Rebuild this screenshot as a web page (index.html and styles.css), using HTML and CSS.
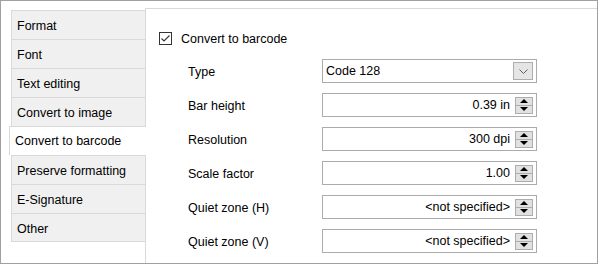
FILE: index.html
```html
<!DOCTYPE html>
<html>
<head>
<meta charset="utf-8">
<link rel="stylesheet" href="styles.css">
</head>
<body>
<div class="window">
  <div class="tabs">
    <div class="tab">Format</div>
    <div class="tab">Font</div>
    <div class="tab">Text editing</div>
    <div class="tab">Convert to image</div>
    <div class="tab selected">Convert to barcode</div>
    <div class="tab">Preserve formatting</div>
    <div class="tab">E-Signature</div>
    <div class="tab last">Other</div>
  </div>
  <div class="panel">
    <div class="check-row">
      <span class="checkbox">
        <svg width="13" height="13" viewBox="0 0 13 13"><polyline points="2.5,6.5 5,9 10.5,3.5" fill="none" stroke="#333" stroke-width="1.1"/></svg>
      </span>
      <span class="check-label">Convert to barcode</span>
    </div>
    <div class="fields">
      <div class="label">Type</div>
      <div class="box combo">
        <span class="combo-text">Code 128</span>
        <span class="drop">
          <svg width="9" height="5" viewBox="0 0 9 5"><polyline points="0.5,0.5 4.5,4.5 8.5,0.5" fill="none" stroke="#606060" stroke-width="1"/></svg>
        </span>
      </div>

      <div class="label">Bar height</div>
      <div class="box spin"><span class="value">0.39 in</span><span class="spinner"><span class="up"></span><span class="down"></span></span></div>

      <div class="label">Resolution</div>
      <div class="box spin"><span class="value">300 dpi</span><span class="spinner"><span class="up"></span><span class="down"></span></span></div>

      <div class="label">Scale factor</div>
      <div class="box spin"><span class="value">1.00</span><span class="spinner"><span class="up"></span><span class="down"></span></span></div>

      <div class="label">Quiet zone (H)</div>
      <div class="box spin"><span class="value">&lt;not specified&gt;</span><span class="spinner"><span class="up"></span><span class="down"></span></span></div>

      <div class="label">Quiet zone (V)</div>
      <div class="box spin"><span class="value">&lt;not specified&gt;</span><span class="spinner"><span class="up"></span><span class="down"></span></span></div>
    </div>
  </div>
</div>
</body>
</html>
```
FILE: styles.css
```css
* { box-sizing: border-box; }
html, body { margin: 0; padding: 0; background: #fff; }
body {
  font-family: "Liberation Sans", Arial, sans-serif;
  font-size: 12.5px;
  color: #000;
}
.window {
  width: 598px;
  height: 264px;
  border: 1px solid #a0a0a0;
  background: #fff;
  display: flex;
  padding-top: 7px;
}
.tabs {
  width: 144px;
  padding-top: 2px;
  display: flex;
  flex-direction: column;
  flex-shrink: 0;
}
.tab {
  margin-left: 10px;
  height: 29px;
  line-height: 27px;
  padding-top: 2px;
  padding-left: 5px;
  background: #f0f0f0;
  border-top: 1px solid #d9d9d9;
  border-left: 1px solid #d9d9d9;
  white-space: nowrap;
}
.tab.last { border-bottom: 1px solid #d9d9d9; }
.tab.selected {
  background: #fff;
  margin-left: 8px;
  margin-right: -1px;
  position: relative;
  z-index: 1;
  padding-top: 1px;
}
.panel {
  flex: 1;
  border-top: 1px solid #d9d9d9;
  border-left: 1px solid #d9d9d9;
  padding-left: 13px;
}
.check-row {
  margin-top: 22px;
  height: 15px;
  display: flex;
  align-items: center;
}
.checkbox {
  width: 13px;
  height: 13px;
  border: 1px solid #333;
  display: flex;
  align-items: center;
  justify-content: center;
  background: #fff;
}
.checkbox svg { display: block; flex-shrink: 0; }
.check-label { margin-left: 9px; }
.fields {
  margin-top: 13px;
  padding-left: 29px;
  display: grid;
  grid-template-columns: 134px 215px;
  grid-auto-rows: 24px;
  row-gap: 10px;
}
.label {
  display: flex;
  align-items: center;
  padding-top: 1px;
}
.box {
  border: 1px solid #ababab;
  background: #fff;
  display: flex;
  align-items: center;
}
.combo { padding-left: 3px; padding-right: 3px; }
.combo-text { flex: 1; }
.drop {
  width: 20px;
  height: 18px;
  background: #e5e5e5;
  border: 1px solid #adadad;
  display: flex;
  align-items: center;
  justify-content: center;
}
.drop svg { display: block; }
.spin { justify-content: flex-end; padding-right: 3px; }
.value { margin-right: 5px; }
.spinner {
  width: 18px;
  height: 17px;
  display: flex;
  flex-direction: column;
  border: 1px solid #adadad;
  background: #e1e1e1;
}
.spinner .up, .spinner .down {
  flex: 1;
  display: flex;
  align-items: center;
  justify-content: center;
}
.spinner .up { border-bottom: 1px solid #adadad; }
.spinner .up::before {
  content: "";
  border-left: 4px solid transparent;
  border-right: 4px solid transparent;
  border-bottom: 4px solid #000;
}
.spinner .down::before {
  content: "";
  border-left: 4px solid transparent;
  border-right: 4px solid transparent;
  border-top: 4px solid #000;
}
```
